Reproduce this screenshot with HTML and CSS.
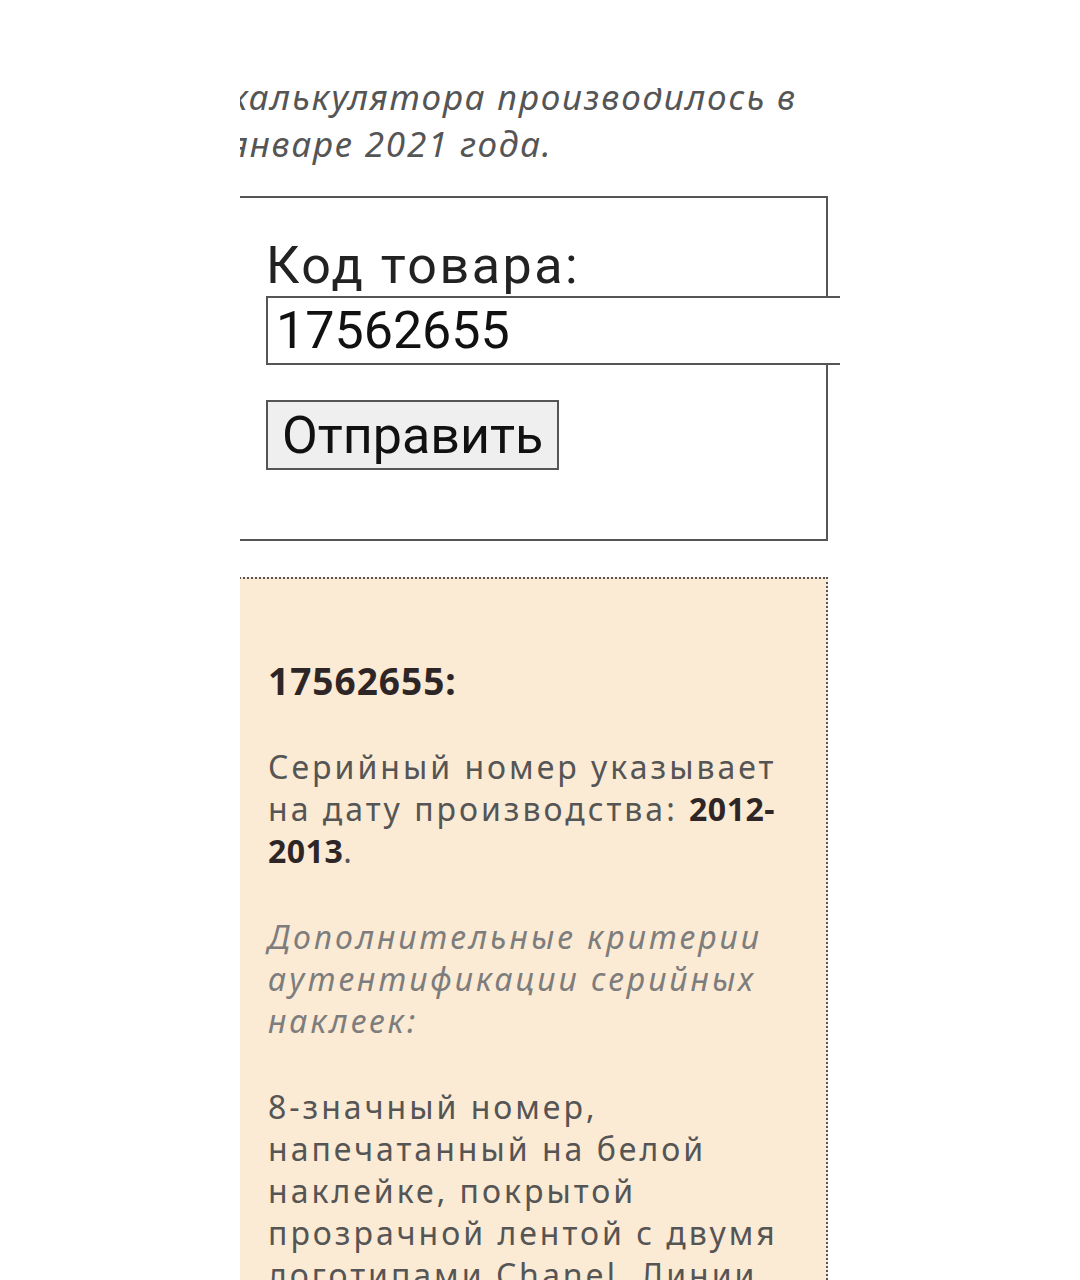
FILE: index.html
```html
<!DOCTYPE html>
<html lang="ru">
<head>
    <meta charset="UTF-8">
    <title>Проверка серийного номера</title>
    <meta name="viewport" content="width=device-width, initial-scale=1">
    <link rel="stylesheet" href="styles.css">
</head>
<body>
    <div class="frame">
        <div class="page">
            <p class="note">калькулятора производилось в<br>январе 2021 года.</p>

            <form class="code-form">
                <label for="code">Код товара:</label>
                <input type="text" id="code" value="17562655">
                <button type="button">Отправить</button>
            </form>

            <div class="result">
                <h3>17562655:</h3>
                <p>Серийный номер указывает<br>на дату производства: <b>2012-<br>2013</b>.</p>
                <p class="criteria">Дополнительные критерии<br>аутентификации серийных<br>наклеек:</p>
                <p>8-значный номер,<br>напечатанный на белой<br>наклейке, покрытой<br>прозрачной лентой с двумя<br>логотипами Chanel. Линии</p>
            </div>
        </div>
    </div>
</body>
</html>
```

FILE: styles.css
```css
body {
    margin: 0;
    background: #fff;
    font-family: 'Noto Sans', sans-serif;
}
.frame {
    margin: 88px 0 0 240px;
    width: 600px;
    height: 1192px;
    overflow: hidden;
}
.page {
    padding-left: 28px;
}
.note {
    margin: -15px 0 0 -38px;
    font-size: 35px;
    line-height: 47px;
    letter-spacing: 1.8px;
    font-style: italic;
    color: #555;
    white-space: nowrap;
}
.code-form {
    margin: 29px 0 0 -60px;
    width: 560px;
    padding: 38px 0 69px 58px;
    border: 2px solid #555;
    border-left: none;
    font-family: Roboto, sans-serif;
}
.code-form label {
    display: block;
    font-size: 52px;
    line-height: 59px;
    letter-spacing: 2.5px;
    color: #222;
}
.code-form input {
    display: block;
    box-sizing: border-box;
    margin: 1px 0 0 0;
    width: 700px;
    height: 69px;
    padding: 0 8px;
    border: 2px solid #555;
    font-family: Roboto, sans-serif;
    font-size: 52px;
    color: #111;
}
.code-form button {
    display: block;
    box-sizing: border-box;
    margin: 35px 0 0 0;
    height: 70px;
    padding: 0 14px;
    background: #efefef;
    border: 2px solid #555;
    font-family: Roboto, sans-serif;
    font-size: 52px;
    color: #111;
}
.result {
    margin: 36px 0 0 -60px;
    width: 558px;
    padding: 76px 0 0 60px;
    background: #fbead4;
    border-top: 2px dotted #555;
    border-right: 2px dotted #555;
    color: #555;
}
.result h3 {
    margin: 0 0 40px;
    font-size: 37px;
    letter-spacing: 1px;
    color: #2e2626;
}
.result p {
    margin: 0 0 44px;
    font-size: 32px;
    line-height: 42px;
    letter-spacing: 3px;
    white-space: nowrap;
}
.result b {
    color: #2e2626;
    letter-spacing: 0.5px;
}
.result .criteria {
    font-style: italic;
    color: #7d7d7d;
}
```
